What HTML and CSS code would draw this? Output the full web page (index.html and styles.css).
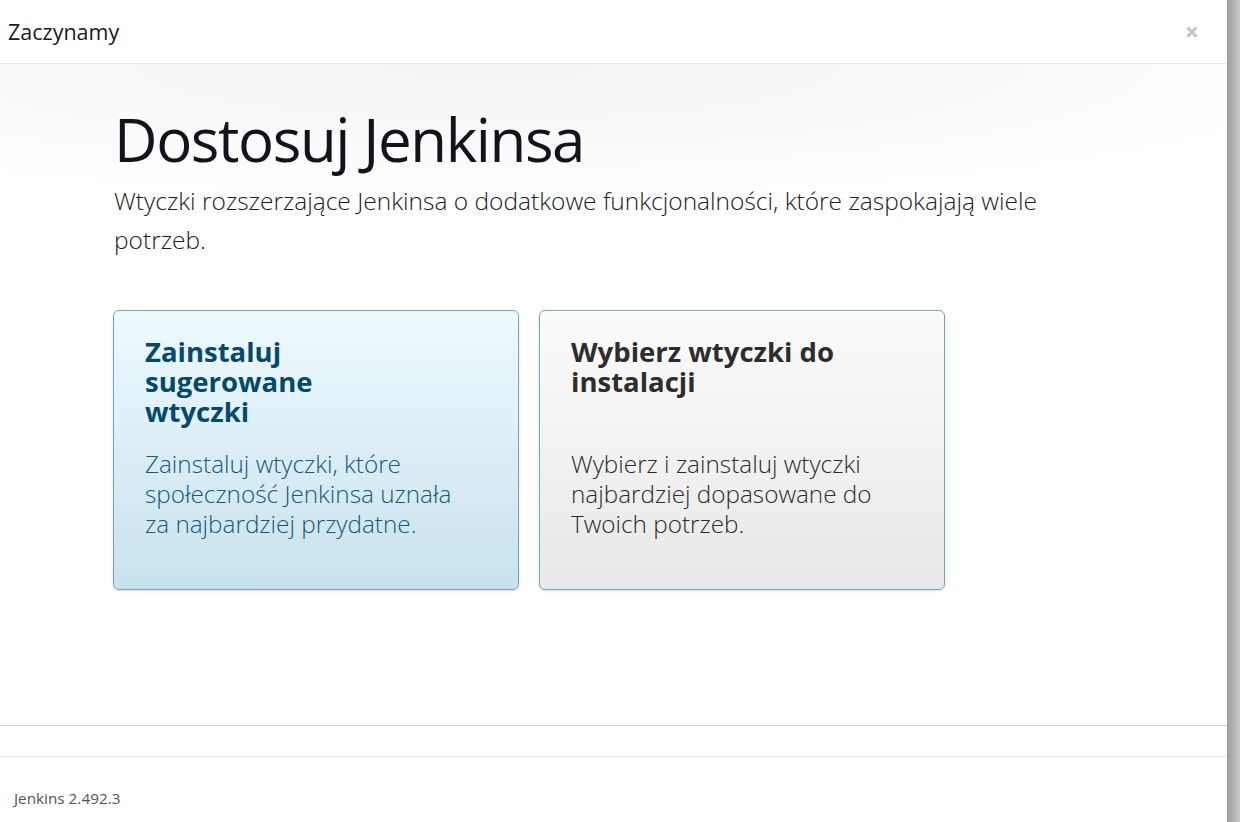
FILE: index.html
```html
<!DOCTYPE html>
<html lang="pl">
<head>
<meta charset="utf-8">
<title>Zaczynamy</title>
<link rel="stylesheet" href="styles.css">
</head>
<body>
<div class="page">
  <div class="dialog">
    <header class="dialog-header">
      <h4 class="dialog-title">Zaczynamy</h4>
      <span class="close">×</span>
    </header>
    <main class="dialog-body">
      <h1 class="title">Dostosuj Jenkinsa</h1>
      <p class="lead">Wtyczki rozszerzające Jenkinsa o dodatkowe funkcjonalności, które zaspokajają wiele potrzeb.</p>
      <div class="cards">
        <a class="card card-primary">
          <b class="card-title">Zainstaluj<br>sugerowane<br>wtyczki</b>
          <span class="card-desc">Zainstaluj wtyczki, które społeczność Jenkinsa uznała za najbardziej przydatne.</span>
        </a>
        <a class="card card-default">
          <b class="card-title">Wybierz wtyczki do instalacji</b>
          <span class="card-desc">Wybierz i zainstaluj wtyczki najbardziej dopasowane do Twoich potrzeb.</span>
        </a>
      </div>
    </main>
    <div class="dialog-footer"></div>
    <footer class="version-bar">
      <span class="version">Jenkins 2.492.3</span>
    </footer>
  </div>
  <div class="edge"></div>
</div>
</body>
</html>
```

FILE: styles.css
```css
html, body {
  margin: 0;
  padding: 0;
  height: 100%;
}
body {
  font-family: "Open Sans", "Noto Sans", sans-serif;
  color: #1b1b24;
  background: #fff;
}
.page {
  display: flex;
  width: 1240px;
  height: 822px;
  overflow: hidden;
}
.dialog {
  width: 1227px;
  height: 822px;
  display: flex;
  flex-direction: column;
  background: #fff;
}
.edge {
  flex: 1;
  background: linear-gradient(to right, #9d9d9d, #c9c9c9);
}
.dialog-header {
  height: 63px;
  border-bottom: 1px solid #e5e5e5;
  display: flex;
  align-items: center;
  justify-content: space-between;
  padding: 0 28px 0 8px;
}
.dialog-title {
  margin: 0;
  font-size: 21.5px;
  font-weight: 400;
  color: #1b1b24;
}
.close {
  font-size: 25px;
  font-weight: 700;
  color: #c4c4c4;
  line-height: 1;
}
.dialog-body {
  flex: 1;
  padding: 37px 114px 0 113px;
  background: radial-gradient(ellipse 900px 140px at 40% 0%, #f4f4f4, #ffffff 100%);
}
.title {
  margin: 0 0 0 1px;
  font-size: 60px;
  font-weight: 400;
  line-height: 76px;
  letter-spacing: -1.4px;
  color: #13131c;
}
.lead {
  margin: 4px 0 0 1px;
  font-size: 24.5px;
  font-weight: 300;
  line-height: 39px;
  color: #1b1b24;
  max-width: 990px;
}
.cards {
  display: flex;
  gap: 20px;
  margin-top: 51px;
}
.card {
  box-sizing: border-box;
  width: 406px;
  height: 280px;
  padding: 26px 40px 26px 31px;
  border: 1px solid #7ea3bb;
  border-radius: 6px;
  box-shadow: 0 1px 3px rgba(0, 0, 0, 0.15);
  display: flex;
  flex-direction: column;
  text-decoration: none;
}
.card-primary {
  background: linear-gradient(to bottom, #eef9fe, #c8e2ed);
  color: #16587c;
}
.card-default {
  background: linear-gradient(to bottom, #fbfbfb, #e8e8e8);
  color: #2b2b2b;
}
.card-title {
  display: block;
  height: 90px;
  font-size: 27.5px;
  font-weight: 700;
  line-height: 30px;
}
.card-primary .card-title {
  color: #034a6c;
}
.card-default .card-title {
  color: #2d2d2d;
}
.card-desc {
  display: block;
  margin-top: 22px;
  font-size: 24.3px;
  font-weight: 300;
  line-height: 30px;
}
.dialog-footer {
  height: 30px;
  border-top: 1px solid #cfcfcf;
  border-bottom: 1px solid #e5e5e5;
}
.version-bar {
  height: 65px;
  display: flex;
  align-items: center;
  padding-left: 14px;
}
.version {
  font-size: 15.3px;
  color: #555;
  margin-top: 16px;
}
```
